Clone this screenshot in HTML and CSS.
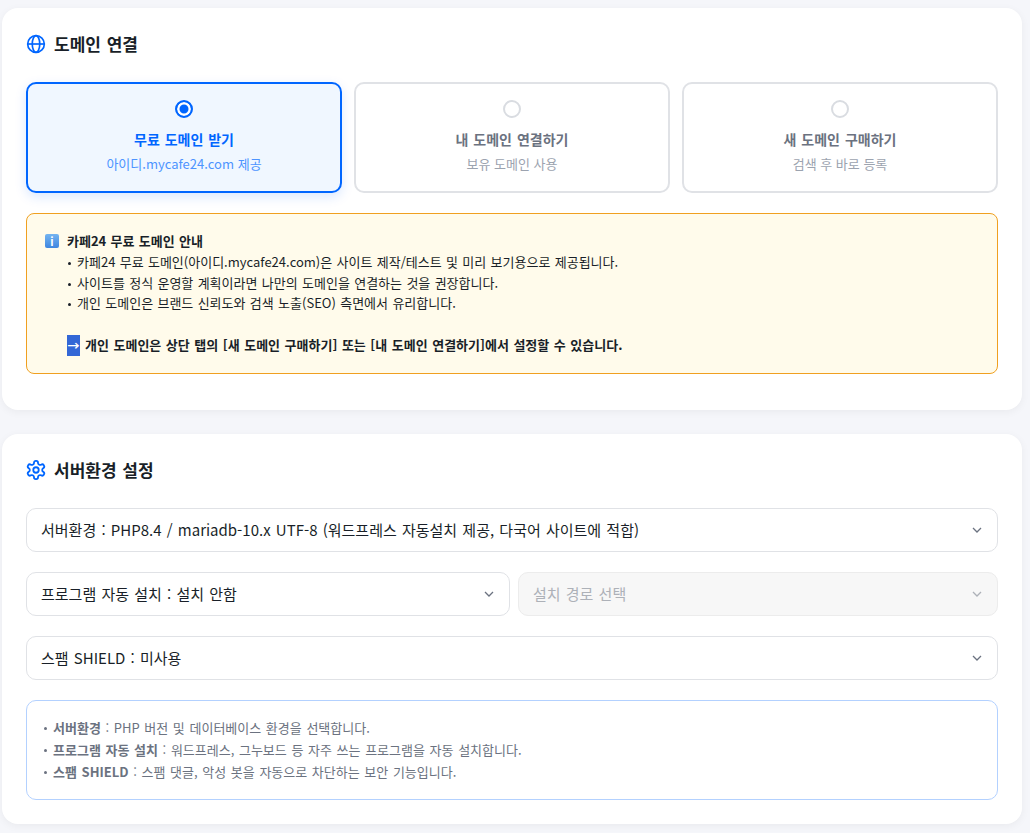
FILE: index.html
```html
<!DOCTYPE html>
<html lang="ko">
<head>
  <meta charset="UTF-8" />
  <title>도메인 연결</title>
  <link rel="stylesheet" href="styles.css">
</head>
<body>

  <!-- Domain -->
  <section class="card domain-card">
    <h2 class="card-title">
      <svg class="title-icon" viewBox="0 0 24 24" fill="none" stroke="currentColor" stroke-width="2">
        <circle cx="12" cy="12" r="10"/>
        <ellipse cx="12" cy="12" rx="4.5" ry="10"/>
        <path d="M2 12h20"/>
      </svg>
      <span>도메인 연결</span>
    </h2>

    <div class="domain-options">
      <div class="option active">
        <span class="radio"></span>
        <strong>무료 도메인 받기</strong>
        <small>아이디.mycafe24.com 제공</small>
      </div>
      <div class="option">
        <span class="radio"></span>
        <strong>내 도메인 연결하기</strong>
        <small>보유 도메인 사용</small>
      </div>
      <div class="option">
        <span class="radio"></span>
        <strong>새 도메인 구매하기</strong>
        <small>검색 후 바로 등록</small>
      </div>
    </div>

    <div class="notice">
      <div class="notice-head"><span class="info-badge">i</span><b>카페24 무료 도메인 안내</b></div>
      <ul>
        <li>카페24 무료 도메인(아이디.mycafe24.com)은 사이트 제작/테스트 및 미리 보기용으로 제공됩니다.</li>
        <li>사이트를 정식 운영할 계획이라면 나만의 도메인을 연결하는 것을 권장합니다.</li>
        <li>개인 도메인은 브랜드 신뢰도와 검색 노출(SEO) 측면에서 유리합니다.</li>
      </ul>
      <p class="notice-foot"><span class="arrow-badge">→</span>개인 도메인은 상단 탭의 [새 도메인 구매하기] 또는 [내 도메인 연결하기]에서 설정할 수 있습니다.</p>
    </div>
  </section>

  <!-- Server -->
  <section class="card server-card">
    <h2 class="card-title">
      <svg class="title-icon" viewBox="1 1 22 22" fill="none" stroke="currentColor" stroke-width="2" stroke-linecap="round" stroke-linejoin="round">
        <path d="M12.22 2h-.44a2 2 0 0 0-2 2v.18a2 2 0 0 1-1 1.73l-.43.25a2 2 0 0 1-2 0l-.15-.08a2 2 0 0 0-2.73.73l-.22.38a2 2 0 0 0 .73 2.73l.15.1a2 2 0 0 1 1 1.72v.51a2 2 0 0 1-1 1.74l-.15.09a2 2 0 0 0-.73 2.73l.22.38a2 2 0 0 0 2.73.73l.15-.08a2 2 0 0 1 2 0l.43.25a2 2 0 0 1 1 1.73V20a2 2 0 0 0 2 2h.44a2 2 0 0 0 2-2v-.18a2 2 0 0 1 1-1.73l.43-.25a2 2 0 0 1 2 0l.15.08a2 2 0 0 0 2.73-.73l.22-.39a2 2 0 0 0-.73-2.73l-.15-.08a2 2 0 0 1-1-1.74v-.5a2 2 0 0 1 1-1.74l.15-.09a2 2 0 0 0 .73-2.73l-.22-.38a2 2 0 0 0-2.73-.73l-.15.08a2 2 0 0 1-2 0l-.43-.25a2 2 0 0 1-1-1.73V4a2 2 0 0 0-2-2z"/>
        <circle cx="12" cy="12" r="3"/>
      </svg>
      <span>서버환경 설정</span>
    </h2>

    <div class="select">
      <span>서버환경 : PHP8.4 / mariadb-10.x UTF-8 (워드프레스 자동설치 제공, 다국어 사이트에 적합)</span>
      <svg class="chevron" viewBox="0 0 12 12" fill="none" stroke="currentColor" stroke-width="1.3"><path d="M2 4l4 4 4-4"/></svg>
    </div>

    <div class="select-row">
      <div class="select">
        <span>프로그램 자동 설치 : 설치 안함</span>
        <svg class="chevron" viewBox="0 0 12 12" fill="none" stroke="currentColor" stroke-width="1.3"><path d="M2 4l4 4 4-4"/></svg>
      </div>
      <div class="select disabled">
        <span>설치 경로 선택</span>
        <svg class="chevron" viewBox="0 0 12 12" fill="none" stroke="currentColor" stroke-width="1.3"><path d="M2 4l4 4 4-4"/></svg>
      </div>
    </div>

    <div class="select">
      <span>스팸 SHIELD : 미사용</span>
      <svg class="chevron" viewBox="0 0 12 12" fill="none" stroke="currentColor" stroke-width="1.3"><path d="M2 4l4 4 4-4"/></svg>
    </div>

    <ul class="help-box">
      <li><b>서버환경</b> : PHP 버전 및 데이터베이스 환경을 선택합니다.</li>
      <li><b>프로그램 자동 설치</b> : 워드프레스, 그누보드 등 자주 쓰는 프로그램을 자동 설치합니다.</li>
      <li><b>스팸 SHIELD</b> : 스팸 댓글, 악성 봇을 자동으로 차단하는 보안 기능입니다.</li>
    </ul>
  </section>

</body>
</html>
```

FILE: styles.css
```css
* {
  box-sizing: border-box;
  margin: 0;
  padding: 0;
}

body {
  width: 1030px;
  height: 833px;
  overflow: hidden;
  padding: 8px 8px 0 2px;
  background-color: #f5f6fa;
  font-family: "Noto Sans CJK KR", "Noto Sans", sans-serif;
  color: #191f28;
}

.card {
  background-color: #fff;
  border-radius: 16px;
  padding: 24px;
  box-shadow: 0 2px 8px rgba(0, 0, 0, 0.05);
}

.domain-card {
  height: 402px;
  margin-bottom: 24px;
}

.server-card {
  height: 390px;
}

.card-title {
  display: flex;
  align-items: center;
  gap: 8px;
  height: 24px;
  margin-bottom: 26px;
  font-size: 17px;
  font-weight: 700;
  line-height: 24px;
  word-spacing: 1px;
}

.title-icon {
  width: 20px;
  height: 20px;
  color: #0066ff;
}

.domain-options {
  display: grid;
  grid-template-columns: repeat(3, 1fr);
  gap: 12px;
  margin-bottom: 20px;
}

.option {
  display: flex;
  flex-direction: column;
  align-items: center;
  height: 111px;
  padding-top: 16px;
  border: 2px solid #e0e2e6;
  border-radius: 10px;
  background-color: #fff;
}

.option strong {
  margin-top: 9px;
  font-size: 14px;
  font-weight: 700;
  line-height: 24px;
  word-spacing: 1px;
  color: #6b7280;
}

.option small {
  margin-top: 4px;
  font-size: 13px;
  line-height: 18px;
  color: #9ca3af;
}

.radio {
  width: 18px;
  height: 18px;
  border: 2px solid #d9dce1;
  border-radius: 50%;
  background-color: #fff;
}

.option.active {
  border-color: #0066ff;
  background-color: #f0f7ff;
  box-shadow: 0 4px 12px rgba(0, 102, 255, 0.15);
}

.option.active strong {
  color: #0066ff;
}

.option.active small {
  color: #4d94ff;
}

.option.active .radio {
  border-color: #0066ff;
  background-color: #0066ff;
  box-shadow: inset 0 0 0 2.5px #fff;
}

.notice {
  height: 161px;
  padding: 17px 18px 0;
  border: 1px solid #f0a020;
  border-radius: 8px;
  background-color: #fffbeb;
  font-size: 13px;
  line-height: 1.6;
  word-spacing: 0.7px;
  color: #191f28;
}

.notice-head {
  display: flex;
  align-items: center;
}

.notice-head b {
  font-weight: 700;
}

.info-badge {
  width: 14px;
  height: 14px;
  margin-right: 8px;
  border-radius: 2px;
  background: linear-gradient(#74b4f0, #3f86e0);
  color: #fff;
  font-size: 11px;
  font-weight: 700;
  line-height: 14px;
  text-align: center;
}

.notice ul {
  list-style: none;
  padding-left: 32px;
}

.notice li {
  position: relative;
}

.notice li::before {
  content: "";
  position: absolute;
  left: -9px;
  top: 10px;
  width: 3px;
  height: 3px;
  border-radius: 50%;
  background-color: #191f28;
}

.notice-foot {
  display: flex;
  align-items: center;
  height: 21px;
  margin-top: 21px;
  padding-left: 22px;
  font-weight: 700;
  word-spacing: 0.9px;
}

.arrow-badge {
  width: 13px;
  height: 21px;
  margin-right: 5px;
  background-color: #3367d6;
  color: #fff;
  font-size: 12px;
  font-weight: 700;
  line-height: 21px;
  text-align: center;
}

.select {
  display: flex;
  align-items: center;
  justify-content: space-between;
  height: 44px;
  margin-bottom: 20px;
  padding: 0 14px;
  border: 1px solid #e0e2e6;
  border-radius: 10px;
  background-color: #fff;
  font-size: 15px;
  word-spacing: 1px;
  color: #191f28;
}

.select span {
  margin-bottom: 2px;
}

.chevron {
  width: 12px;
  height: 12px;
  color: #6b7280;
}

.select-row {
  display: grid;
  grid-template-columns: 484px 480px;
  gap: 8px;
}

.select.disabled {
  background-color: #f7f7f7;
  border-color: #ececec;
  color: #adb1b8;
}

.select.disabled .chevron {
  color: #adb1b8;
}

.help-box {
  height: 100px;
  padding: 16px 17px 0 26px;
  list-style: none;
  border: 1px solid #b3d1ff;
  border-radius: 10px;
  font-size: 13px;
  line-height: 22px;
  word-spacing: 1px;
  color: #6b7280;
}

.help-box li {
  position: relative;
}

.help-box li::before {
  content: "";
  position: absolute;
  left: -9px;
  top: 10px;
  width: 3px;
  height: 3px;
  border-radius: 50%;
  background-color: #6b7280;
}
```
